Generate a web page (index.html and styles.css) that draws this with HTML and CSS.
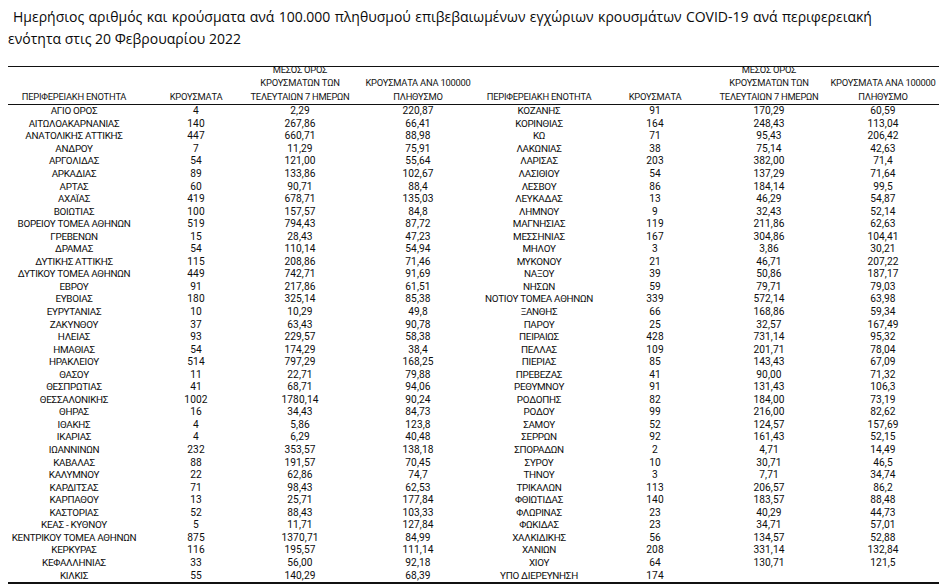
FILE: index.html
```html
<!DOCTYPE html>
<html lang="el">
<head>
<meta charset="utf-8">
<title>COVID-19 ανά περιφερειακή ενότητα</title>
<link rel="stylesheet" href="styles.css">
</head>
<body>
<div class="title">
  <div class="t1">Ημερήσιος αριθμός και κρούσματα ανά 100.000 πληθυσμού επιβεβαιωμένων εγχώριων κρουσμάτων COVID-19 ανά περιφερειακή</div>
  <div class="t2">ενότητα στις 20 Φεβρουαρίου 2022</div>
</div>
<div class="tbl">
  <div class="row head">
    <div class="c"><span>ΠΕΡΙΦΕΡΕΙΑΚΗ ΕΝΟΤΗΤΑ</span></div>
    <div class="c"><span>ΚΡΟΥΣΜΑΤΑ</span></div>
    <div class="c"><span>ΜΕΣΟΣ ΟΡΟΣ</span><span>ΚΡΟΥΣΜΑΤΩΝ ΤΩΝ</span><span>ΤΕΛΕΥΤΑΙΩΝ 7 ΗΜΕΡΩΝ</span></div>
    <div class="c"><span>ΚΡΟΥΣΜΑΤΑ ΑΝΑ 100000</span><span>ΠΛΗΘΥΣΜΟ</span></div>
    <div class="c"><span>ΠΕΡΙΦΕΡΕΙΑΚΗ ΕΝΟΤΗΤΑ</span></div>
    <div class="c"><span>ΚΡΟΥΣΜΑΤΑ</span></div>
    <div class="c"><span>ΜΕΣΟΣ ΟΡΟΣ</span><span>ΚΡΟΥΣΜΑΤΩΝ ΤΩΝ</span><span>ΤΕΛΕΥΤΑΙΩΝ 7 ΗΜΕΡΩΝ</span></div>
    <div class="c"><span>ΚΡΟΥΣΜΑΤΑ ΑΝΑ 100000</span><span>ΠΛΗΘΥΣΜΟ</span></div>
  </div>
  <div class="body">
    <div class="row"><div class="n">ΑΓΙΟ ΟΡΟΣ</div><div class="d">4</div><div class="d">2,29</div><div class="d">220,87</div><div class="n">ΚΟΖΑΝΗΣ</div><div class="d">91</div><div class="d">170,29</div><div class="d">60,59</div></div>
    <div class="row"><div class="n">ΑΙΤΩΛΟΑΚΑΡΝΑΝΙΑΣ</div><div class="d">140</div><div class="d">267,86</div><div class="d">66,41</div><div class="n">ΚΟΡΙΝΘΙΑΣ</div><div class="d">164</div><div class="d">248,43</div><div class="d">113,04</div></div>
    <div class="row"><div class="n">ΑΝΑΤΟΛΙΚΗΣ ΑΤΤΙΚΗΣ</div><div class="d">447</div><div class="d">660,71</div><div class="d">88,98</div><div class="n">ΚΩ</div><div class="d">71</div><div class="d">95,43</div><div class="d">206,42</div></div>
    <div class="row"><div class="n">ΑΝΔΡΟΥ</div><div class="d">7</div><div class="d">11,29</div><div class="d">75,91</div><div class="n">ΛΑΚΩΝΙΑΣ</div><div class="d">38</div><div class="d">75,14</div><div class="d">42,63</div></div>
    <div class="row"><div class="n">ΑΡΓΟΛΙΔΑΣ</div><div class="d">54</div><div class="d">121,00</div><div class="d">55,64</div><div class="n">ΛΑΡΙΣΑΣ</div><div class="d">203</div><div class="d">382,00</div><div class="d">71,4</div></div>
    <div class="row"><div class="n">ΑΡΚΑΔΙΑΣ</div><div class="d">89</div><div class="d">133,86</div><div class="d">102,67</div><div class="n">ΛΑΣΙΘΙΟΥ</div><div class="d">54</div><div class="d">137,29</div><div class="d">71,64</div></div>
    <div class="row"><div class="n">ΑΡΤΑΣ</div><div class="d">60</div><div class="d">90,71</div><div class="d">88,4</div><div class="n">ΛΕΣΒΟΥ</div><div class="d">86</div><div class="d">184,14</div><div class="d">99,5</div></div>
    <div class="row"><div class="n">ΑΧΑΪΑΣ</div><div class="d">419</div><div class="d">678,71</div><div class="d">135,03</div><div class="n">ΛΕΥΚΑΔΑΣ</div><div class="d">13</div><div class="d">46,29</div><div class="d">54,87</div></div>
    <div class="row"><div class="n">ΒΟΙΩΤΙΑΣ</div><div class="d">100</div><div class="d">157,57</div><div class="d">84,8</div><div class="n">ΛΗΜΝΟΥ</div><div class="d">9</div><div class="d">32,43</div><div class="d">52,14</div></div>
    <div class="row"><div class="n">ΒΟΡΕΙΟΥ ΤΟΜΕΑ ΑΘΗΝΩΝ</div><div class="d">519</div><div class="d">794,43</div><div class="d">87,72</div><div class="n">ΜΑΓΝΗΣΙΑΣ</div><div class="d">119</div><div class="d">211,86</div><div class="d">62,63</div></div>
    <div class="row"><div class="n">ΓΡΕΒΕΝΩΝ</div><div class="d">15</div><div class="d">28,43</div><div class="d">47,23</div><div class="n">ΜΕΣΣΗΝΙΑΣ</div><div class="d">167</div><div class="d">304,86</div><div class="d">104,41</div></div>
    <div class="row"><div class="n">ΔΡΑΜΑΣ</div><div class="d">54</div><div class="d">110,14</div><div class="d">54,94</div><div class="n">ΜΗΛΟΥ</div><div class="d">3</div><div class="d">3,86</div><div class="d">30,21</div></div>
    <div class="row"><div class="n">ΔΥΤΙΚΗΣ ΑΤΤΙΚΗΣ</div><div class="d">115</div><div class="d">208,86</div><div class="d">71,46</div><div class="n">ΜΥΚΟΝΟΥ</div><div class="d">21</div><div class="d">46,71</div><div class="d">207,22</div></div>
    <div class="row"><div class="n">ΔΥΤΙΚΟΥ ΤΟΜΕΑ ΑΘΗΝΩΝ</div><div class="d">449</div><div class="d">742,71</div><div class="d">91,69</div><div class="n">ΝΑΞΟΥ</div><div class="d">39</div><div class="d">50,86</div><div class="d">187,17</div></div>
    <div class="row"><div class="n">ΕΒΡΟΥ</div><div class="d">91</div><div class="d">217,86</div><div class="d">61,51</div><div class="n">ΝΗΣΩΝ</div><div class="d">59</div><div class="d">79,71</div><div class="d">79,03</div></div>
    <div class="row"><div class="n">ΕΥΒΟΙΑΣ</div><div class="d">180</div><div class="d">325,14</div><div class="d">85,38</div><div class="n">ΝΟΤΙΟΥ ΤΟΜΕΑ ΑΘΗΝΩΝ</div><div class="d">339</div><div class="d">572,14</div><div class="d">63,98</div></div>
    <div class="row"><div class="n">ΕΥΡΥΤΑΝΙΑΣ</div><div class="d">10</div><div class="d">10,29</div><div class="d">49,8</div><div class="n">ΞΑΝΘΗΣ</div><div class="d">66</div><div class="d">168,86</div><div class="d">59,34</div></div>
    <div class="row"><div class="n">ΖΑΚΥΝΘΟΥ</div><div class="d">37</div><div class="d">63,43</div><div class="d">90,78</div><div class="n">ΠΑΡΟΥ</div><div class="d">25</div><div class="d">32,57</div><div class="d">167,49</div></div>
    <div class="row"><div class="n">ΗΛΕΙΑΣ</div><div class="d">93</div><div class="d">229,57</div><div class="d">58,38</div><div class="n">ΠΕΙΡΑΙΩΣ</div><div class="d">428</div><div class="d">731,14</div><div class="d">95,32</div></div>
    <div class="row"><div class="n">ΗΜΑΘΙΑΣ</div><div class="d">54</div><div class="d">174,29</div><div class="d">38,4</div><div class="n">ΠΕΛΛΑΣ</div><div class="d">109</div><div class="d">201,71</div><div class="d">78,04</div></div>
    <div class="row"><div class="n">ΗΡΑΚΛΕΙΟΥ</div><div class="d">514</div><div class="d">797,29</div><div class="d">168,25</div><div class="n">ΠΙΕΡΙΑΣ</div><div class="d">85</div><div class="d">143,43</div><div class="d">67,09</div></div>
    <div class="row"><div class="n">ΘΑΣΟΥ</div><div class="d">11</div><div class="d">22,71</div><div class="d">79,88</div><div class="n">ΠΡΕΒΕΖΑΣ</div><div class="d">41</div><div class="d">90,00</div><div class="d">71,32</div></div>
    <div class="row"><div class="n">ΘΕΣΠΡΩΤΙΑΣ</div><div class="d">41</div><div class="d">68,71</div><div class="d">94,06</div><div class="n">ΡΕΘΥΜΝΟΥ</div><div class="d">91</div><div class="d">131,43</div><div class="d">106,3</div></div>
    <div class="row"><div class="n">ΘΕΣΣΑΛΟΝΙΚΗΣ</div><div class="d">1002</div><div class="d">1780,14</div><div class="d">90,24</div><div class="n">ΡΟΔΟΠΗΣ</div><div class="d">82</div><div class="d">184,00</div><div class="d">73,19</div></div>
    <div class="row"><div class="n">ΘΗΡΑΣ</div><div class="d">16</div><div class="d">34,43</div><div class="d">84,73</div><div class="n">ΡΟΔΟΥ</div><div class="d">99</div><div class="d">216,00</div><div class="d">82,62</div></div>
    <div class="row"><div class="n">ΙΘΑΚΗΣ</div><div class="d">4</div><div class="d">5,86</div><div class="d">123,8</div><div class="n">ΣΑΜΟΥ</div><div class="d">52</div><div class="d">124,57</div><div class="d">157,69</div></div>
    <div class="row"><div class="n">ΙΚΑΡΙΑΣ</div><div class="d">4</div><div class="d">6,29</div><div class="d">40,48</div><div class="n">ΣΕΡΡΩΝ</div><div class="d">92</div><div class="d">161,43</div><div class="d">52,15</div></div>
    <div class="row"><div class="n">ΙΩΑΝΝΙΝΩΝ</div><div class="d">232</div><div class="d">353,57</div><div class="d">138,18</div><div class="n">ΣΠΟΡΑΔΩΝ</div><div class="d">2</div><div class="d">4,71</div><div class="d">14,49</div></div>
    <div class="row"><div class="n">ΚΑΒΑΛΑΣ</div><div class="d">88</div><div class="d">191,57</div><div class="d">70,45</div><div class="n">ΣΥΡΟΥ</div><div class="d">10</div><div class="d">30,71</div><div class="d">46,5</div></div>
    <div class="row"><div class="n">ΚΑΛΥΜΝΟΥ</div><div class="d">22</div><div class="d">62,86</div><div class="d">74,7</div><div class="n">ΤΗΝΟΥ</div><div class="d">3</div><div class="d">7,71</div><div class="d">34,74</div></div>
    <div class="row"><div class="n">ΚΑΡΔΙΤΣΑΣ</div><div class="d">71</div><div class="d">98,43</div><div class="d">62,53</div><div class="n">ΤΡΙΚΑΛΩΝ</div><div class="d">113</div><div class="d">206,57</div><div class="d">86,2</div></div>
    <div class="row"><div class="n">ΚΑΡΠΑΘΟΥ</div><div class="d">13</div><div class="d">25,71</div><div class="d">177,84</div><div class="n">ΦΘΙΩΤΙΔΑΣ</div><div class="d">140</div><div class="d">183,57</div><div class="d">88,48</div></div>
    <div class="row"><div class="n">ΚΑΣΤΟΡΙΑΣ</div><div class="d">52</div><div class="d">88,43</div><div class="d">103,33</div><div class="n">ΦΛΩΡΙΝΑΣ</div><div class="d">23</div><div class="d">40,29</div><div class="d">44,73</div></div>
    <div class="row"><div class="n">ΚΕΑΣ - ΚΥΘΝΟΥ</div><div class="d">5</div><div class="d">11,71</div><div class="d">127,84</div><div class="n">ΦΩΚΙΔΑΣ</div><div class="d">23</div><div class="d">34,71</div><div class="d">57,01</div></div>
    <div class="row"><div class="n">ΚΕΝΤΡΙΚΟΥ ΤΟΜΕΑ ΑΘΗΝΩΝ</div><div class="d">875</div><div class="d">1370,71</div><div class="d">84,99</div><div class="n">ΧΑΛΚΙΔΙΚΗΣ</div><div class="d">56</div><div class="d">134,57</div><div class="d">52,88</div></div>
    <div class="row"><div class="n">ΚΕΡΚΥΡΑΣ</div><div class="d">116</div><div class="d">195,57</div><div class="d">111,14</div><div class="n">ΧΑΝΙΩΝ</div><div class="d">208</div><div class="d">331,14</div><div class="d">132,84</div></div>
    <div class="row"><div class="n">ΚΕΦΑΛΛΗΝΙΑΣ</div><div class="d">33</div><div class="d">56,00</div><div class="d">92,18</div><div class="n">ΧΙΟΥ</div><div class="d">64</div><div class="d">130,71</div><div class="d">121,5</div></div>
    <div class="row"><div class="n">ΚΙΛΚΙΣ</div><div class="d">55</div><div class="d">140,29</div><div class="d">68,39</div><div class="n">ΥΠΟ ΔΙΕΡΕΥΝΗΣΗ</div><div class="d">174</div><div class="d"></div><div class="d"></div></div>
  </div>
</div>
</body>
</html>
```
FILE: styles.css
```css
html, body {
  margin: 0;
  padding: 0;
  background: #ffffff;
}

body {
  color: #0d0d0d;
  font-family: Roboto, "Noto Sans", "DejaVu Sans", sans-serif;
}

.title {
  padding: 6px 0 0 8px;
  font-family: "Open Sans", "Noto Sans", sans-serif;
  font-size: 14px;
  line-height: 22px;
  white-space: nowrap;
  margin-bottom: 16px;
  color: #0a0a0a;
}

.t1 {
  padding-left: 5px;
  word-spacing: 0.7px;
}

.tbl {
  margin-left: 8px;
  width: 931px;
  border-top: 1px solid #111111;
  border-bottom: 2px solid #111111;
}

.row {
  display: grid;
  grid-template-columns: 132px 112px 96px 140px 102px 130px 98px 130px;
  grid-template-rows: 12.55px;
  height: 12.55px;
}

.row.head {
  grid-template-rows: 37px;
  height: 38px;
  box-sizing: border-box;
  border-bottom: 1px solid #111111;
  width: 931px;
}

.c {
  display: flex;
  flex-direction: column;
  justify-content: flex-end;
  align-items: center;
  min-height: 0;
  font-size: 9.4px;
  line-height: 13.8px;
  letter-spacing: -0.25px;
  white-space: nowrap;
  color: #141414;
}

.n, .d {
  display: flex;
  justify-content: center;
  align-items: center;
  min-height: 0;
  white-space: nowrap;
  line-height: 12px;
  color: #0d0d0d;
}

.n {
  font-size: 9.9px;
  letter-spacing: -0.3px;
}

.d {
  font-size: 10.2px;
  letter-spacing: 0.1px;
}
```
